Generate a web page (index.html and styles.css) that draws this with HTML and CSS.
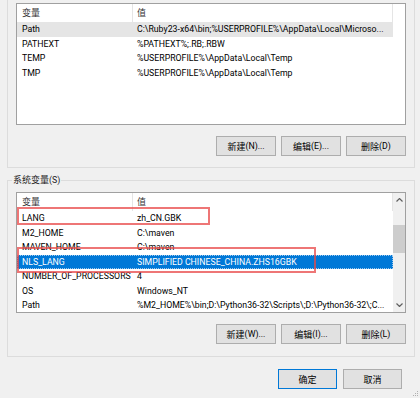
FILE: index.html
```html
<!doctype html>
<html>
  <head>
    <meta charset="utf-8" />
    <title>环境变量</title>
    <link rel="stylesheet" href="styles.css">
  </head>
  <body>
    <div class="dialog">
      <div class="group group-user">
        <div class="list list-user">
          <div class="list-main">
            <div class="row head">
              <div class="cell"><span class="zh">变量</span></div>
              <div class="cell"><span class="zh">值</span></div>
            </div>
            <div class="row hover">
              <div class="cell">Path</div>
              <div class="cell">C:\Ruby23-x64\bin;%USERPROFILE%\AppData\Local\Microso...</div>
            </div>
            <div class="row">
              <div class="cell">PATHEXT</div>
              <div class="cell">%PATHEXT%;.RB;.RBW</div>
            </div>
            <div class="row">
              <div class="cell">TEMP</div>
              <div class="cell">%USERPROFILE%\AppData\Local\Temp</div>
            </div>
            <div class="row">
              <div class="cell">TMP</div>
              <div class="cell">%USERPROFILE%\AppData\Local\Temp</div>
            </div>
          </div>
        </div>
        <div class="actions">
          <button class="btn"><span class="zh">新建</span>(N)...</button>
          <button class="btn"><span class="zh">编辑</span>(E)...</button>
          <button class="btn"><span class="zh">删除</span>(D)</button>
        </div>
      </div>

      <div class="group group-system">
        <span class="group-title"><span class="zh">系统变量</span>(S)</span>
        <div class="list list-system">
          <div class="list-main">
            <div class="row head">
              <div class="cell"><span class="zh">变量</span></div>
              <div class="cell"><span class="zh">值</span></div>
            </div>
            <div class="row">
              <div class="cell">LANG</div>
              <div class="cell">zh_CN.GBK</div>
            </div>
            <div class="row">
              <div class="cell">M2_HOME</div>
              <div class="cell">C:\maven</div>
            </div>
            <div class="row">
              <div class="cell">MAVEN_HOME</div>
              <div class="cell">C:\maven</div>
            </div>
            <div class="row selected">
              <div class="cell">NLS_LANG</div>
              <div class="cell">SIMPLIFIED CHINESE_CHINA.ZHS16GBK</div>
            </div>
            <div class="row">
              <div class="cell">NUMBER_OF_PROCESSORS</div>
              <div class="cell">4</div>
            </div>
            <div class="row">
              <div class="cell">OS</div>
              <div class="cell">Windows_NT</div>
            </div>
            <div class="row">
              <div class="cell">Path</div>
              <div class="cell">%M2_HOME%\bin;D:\Python36-32\Scripts\;D:\Python36-32\;C...</div>
            </div>
          </div>
          <div class="scrollbar">
            <span class="arrow">
              <svg width="7" height="4" viewBox="0 0 7 4"><polyline points="0.5,3.5 3.5,0.5 6.5,3.5" fill="none" stroke="#606060" stroke-width="1.2"/></svg>
            </span>
            <div class="track"><div class="thumb"></div></div>
            <span class="arrow">
              <svg width="7" height="4" viewBox="0 0 7 4"><polyline points="0.5,0.5 3.5,3.5 6.5,0.5" fill="none" stroke="#606060" stroke-width="1.2"/></svg>
            </span>
          </div>
          <div class="mark mark-lang"></div>
          <div class="mark mark-nls"></div>
        </div>
        <div class="actions">
          <button class="btn"><span class="zh">新建</span>(W)...</button>
          <button class="btn"><span class="zh">编辑</span>(I)...</button>
          <button class="btn"><span class="zh">删除</span>(L)</button>
        </div>
      </div>

      <div class="footer">
        <button class="btn btn-default"><span class="zh">确定</span></button>
        <button class="btn"><span class="zh">取消</span></button>
      </div>
    </div>
    <svg class="grip" width="6" height="6" viewBox="0 0 6 6">
      <rect x="4" y="0" width="1" height="1" fill="#b0b0b0"/>
      <rect x="2" y="2" width="1" height="1" fill="#b0b0b0"/>
      <rect x="4" y="2" width="1" height="1" fill="#b0b0b0"/>
      <rect x="0" y="4" width="1" height="1" fill="#b0b0b0"/>
      <rect x="2" y="4" width="1" height="1" fill="#b0b0b0"/>
      <rect x="4" y="4" width="1" height="1" fill="#b0b0b0"/>
    </svg>
  </body>
</html>
```

FILE: styles.css
```css
* {
  box-sizing: border-box;
}
html,
body {
  margin: 0;
  padding: 0;
}
body {
  width: 420px;
  height: 398px;
  overflow: hidden;
  position: relative;
  background: #f0f0f0;
  color: #000;
  font-family: Roboto, "Noto Sans CJK SC", sans-serif;
  font-size: 8.75px;
}
.zh {
  font-family: "Noto Sans CJK SC", sans-serif;
  font-size: 9px;
}
.dialog {
  width: 420px;
  padding: 0 5px 0 7px;
}
.group {
  border: 1px solid #dcdcdc;
  padding: 0 8px 11px;
}
.group-user {
  border-top: none;
  padding-top: 3px;
}
.group-system {
  position: relative;
  margin-top: 12px;
  padding-top: 11px;
  padding-bottom: 12px;
}
.group-title {
  position: absolute;
  left: 4px;
  top: -8px;
  padding: 0 1px;
  line-height: 14px;
  background: #f0f0f0;
  color: #222;
}
.list {
  position: relative;
  display: flex;
  background: #fff;
  border: 1px solid #a0a0a0;
  overflow: hidden;
}
.list-user {
  height: 122px;
}
.list-system {
  height: 121px;
}
.list-main {
  width: 376px;
  flex: none;
}
.row {
  display: grid;
  grid-template-columns: 116px 260px;
  height: 14.5px;
  line-height: 14.5px;
}
.row.head {
  height: 18px;
  line-height: 18px;
  color: #333;
}
.head .cell {
  border-right: 1px solid #e5e5e5;
}
.cell {
  padding-left: 5px;
  white-space: nowrap;
  overflow: hidden;
  text-overflow: ellipsis;
}
.cell + .cell {
  padding-left: 4px;
  padding-right: 3px;
}
.hover {
  background: #e5e5e5;
}
.selected {
  background: #0078d7;
  color: #fff;
  outline: 1px dotted #9cc8ee;
  outline-offset: -1px;
}
.scrollbar {
  width: 12px;
  flex: none;
  display: flex;
  flex-direction: column;
  background: #f0f0f0;
}
.arrow {
  height: 14px;
  display: flex;
  align-items: center;
  justify-content: center;
}
.track {
  flex: 1;
}
.thumb {
  margin-top: 18px;
  height: 28px;
  background: #cdcdcd;
}
.mark {
  position: absolute;
  left: 0;
  border: 2px solid rgba(232, 72, 72, 0.75);
}
.mark-lang {
  top: 14px;
  width: 193px;
  height: 18px;
}
.mark-nls {
  top: 54px;
  width: 299px;
  height: 26px;
}
.actions {
  display: flex;
  justify-content: flex-end;
  gap: 5px;
  margin-top: 11px;
}
.btn {
  width: 60px;
  height: 20px;
  padding: 0;
  display: flex;
  align-items: center;
  justify-content: center;
  background: #e1e1e1;
  border: 1px solid #adadad;
  font: inherit;
  color: #000;
}
.footer {
  display: flex;
  justify-content: flex-end;
  gap: 6px;
  margin-top: 12px;
  padding-right: 13px;
}
.footer .btn {
  width: 59px;
}
.btn-default {
  border-color: #0078d7;
}
.grip {
  position: absolute;
  right: 1px;
  bottom: 1px;
}
```
